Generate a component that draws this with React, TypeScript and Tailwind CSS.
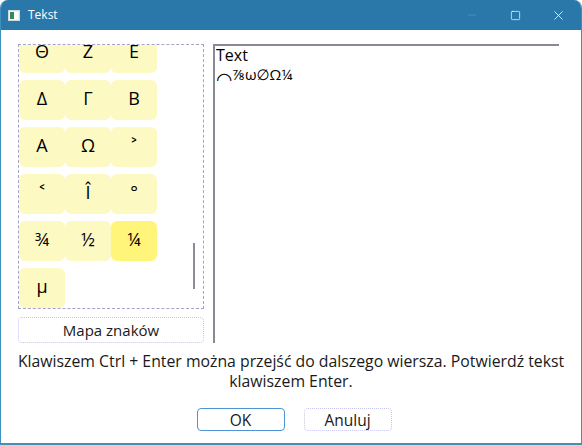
import { Minus, Square, X } from "lucide-react";

const keys = ["Θ", "Ζ", "Ε", "Δ", "Γ", "Β", "Α", "Ω", "˃", "˂", "Î", "°", "¾", "½", "¼", "µ"];

const CharKey = ({ ch, active }: { ch: string; active?: boolean }) => (
    <div
        className={`flex h-[40px] w-[46px] items-center justify-center rounded-[6px] pb-[4px] text-[18px] text-black ${
            active ? "bg-[#fff57a]" : "bg-[#fdf9c2]"
        }`}
    >
        {ch}
    </div>
);

const App = () => {
    return (
        <div
            className="flex h-[445px] w-[582px] flex-col overflow-hidden rounded-t-[8px] border-x border-b-2 border-x-[#3f8fbf] border-b-[#4b8fae] bg-white text-[#1a1a1a]"
            style={{ fontFamily: '"Open Sans", "DejaVu Sans", sans-serif' }}
        >
            {/* title bar */}
            <div className="flex h-[30px] shrink-0 items-center bg-[#2a77aa] pl-[7px] text-white">
                <svg width="12" height="11" viewBox="0 0 12 11" className="mr-[8px]">
                    <rect x="0.5" y="0.5" width="11" height="10" fill="#f4f4f4" stroke="#d0d8e0" />
                    <rect x="2" y="2" width="4" height="7" fill="#2f8a5c" />
                    <rect x="6" y="2" width="4" height="7" fill="#ffffff" />
                </svg>
                <span className="text-[12px]">Tekst</span>
                <div className="ml-auto flex items-center">
                    <div className="flex w-[46px] justify-center text-[#6aa3c8]">
                        <Minus className="h-[12px] w-[12px]" strokeWidth={1} />
                    </div>
                    <div className="flex w-[40px] justify-center">
                        <Square className="h-[11px] w-[11px]" strokeWidth={1.5} />
                    </div>
                    <div className="flex w-[46px] justify-center">
                        <X className="h-[15px] w-[15px]" strokeWidth={1.3} />
                    </div>
                </div>
            </div>

            {/* body */}
            <div className="flex flex-1 flex-col px-[17px] pt-[14px]">
                <div className="flex gap-[9px]">
                    <div className="flex w-[186px] flex-col gap-[8px]">
                        <div className="relative h-[265px] overflow-hidden border border-dashed border-[#a3a3c6]">
                            <div className="mt-[-12px] grid grid-cols-[46px_46px_46px] gap-y-[7px]">
                                {keys.map((k) => (
                                    <CharKey key={k} ch={k} active={k === "¼"} />
                                ))}
                            </div>
                            <div className="absolute left-[174px] top-[198px] h-[46px] w-[2px] bg-[#8c8c9c]" />
                        </div>
                        <button
                            type="button"
                            className="h-[26px] rounded-[4px] border border-dotted border-[#c4c4ee] text-[15px] text-[#1a1a1a]"
                        >
                            Mapa znaków
                        </button>
                    </div>
                    <div className="h-[299px] w-[346px] border-l-2 border-t-2 border-[#8a8a94] pl-[1px] pt-[1px] text-[16px] leading-[17px] text-black">
                        <div>Text</div>
                        <div className="text-[15px]">
                            <span className="relative top-[6px] text-[19px] leading-none">◠</span>⅞ω∅Ω¼
                        </div>
                    </div>
                </div>

                <p className="mx-[-17px] mt-[8px] whitespace-nowrap text-center text-[15.8px] leading-[20px] text-[#1a1a1a]">
                    Klawiszem Ctrl + Enter można przejść do dalszego wiersza. Potwierdź tekst
                    <br />
                    klawiszem Enter.
                </p>

                <div className="mt-[17px] flex justify-center gap-[19px] pl-[6px]">
                    <button
                        type="button"
                        className="h-[23px] w-[88px] rounded-[4px] border border-[#4d94d6] text-[15.5px] text-[#1a1a1a]"
                    >
                        OK
                    </button>
                    <button
                        type="button"
                        className="h-[23px] w-[88px] rounded-[4px] border border-dotted border-[#c4c4ee] text-[15.5px] text-[#1a1a1a]"
                    >
                        Anuluj
                    </button>
                </div>
            </div>
        </div>
    );
};

export default App;
